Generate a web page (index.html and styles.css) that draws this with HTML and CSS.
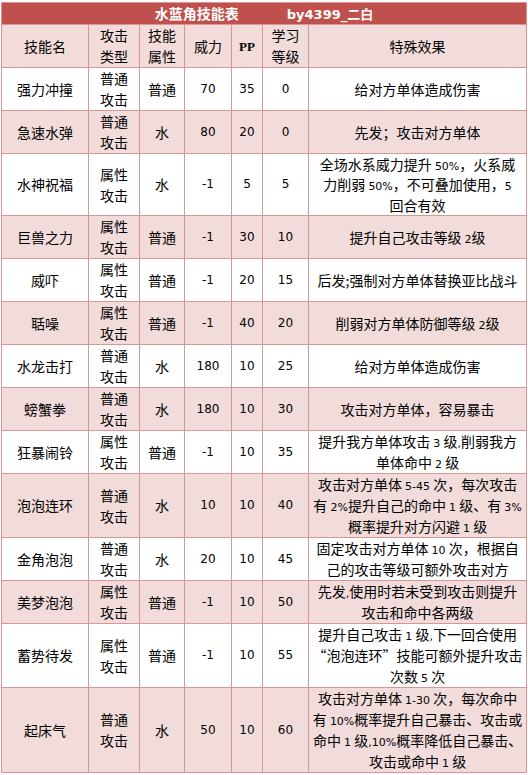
FILE: index.html
```html
<!DOCTYPE html>
<html lang="zh-CN">
<head>
<meta charset="utf-8">
<title>水蓝角技能表</title>
<link rel="stylesheet" href="styles.css">
</head>
<body>
<table class="skills">
  <colgroup>
    <col class="c1"><col class="c2"><col class="c3"><col class="c4"><col class="c5"><col class="c6"><col class="c7">
  </colgroup>
  <thead>
    <tr class="title-row">
      <th colspan="7" class="title"><span>水蓝角技能表</span><span class="author">by4399_二白</span></th>
    </tr>
    <tr class="head">
      <th>技能名</th><th>攻击<br>类型</th><th>技能<br>属性</th><th>威力</th><th class="pp">PP</th><th>学习<br>等级</th><th>特殊效果</th>
    </tr>
  </thead>
  <tbody>
    <tr>
      <td>强力冲撞</td><td>普通<br>攻击</td><td>普通</td><td class="n">70</td><td class="n">35</td><td class="n">0</td><td>给对方单体造成伤害</td>
    </tr>
    <tr class="alt">
      <td>急速水弹</td><td>普通<br>攻击</td><td>水</td><td class="n">80</td><td class="n">20</td><td class="n">0</td><td>先发；攻击对方单体</td>
    </tr>
    <tr class="tight">
      <td>水神祝福</td><td>属性<br>攻击</td><td>水</td><td class="n">-1</td><td class="n">5</td><td class="n">5</td><td>全场水系威力提升 <span class="d">50%</span>，火系威<br>力削弱 <span class="d">50%</span>，不可叠加使用，<span class="d">5</span><br>回合有效</td>
    </tr>
    <tr class="alt">
      <td>巨兽之力</td><td>属性<br>攻击</td><td>普通</td><td class="n">-1</td><td class="n">30</td><td class="n">10</td><td>提升自己攻击等级 <span class="d">2</span>级</td>
    </tr>
    <tr>
      <td>威吓</td><td>属性<br>攻击</td><td>普通</td><td class="n">-1</td><td class="n">20</td><td class="n">15</td><td>后发;强制对方单体替换亚比战斗</td>
    </tr>
    <tr class="alt">
      <td>聒噪</td><td>属性<br>攻击</td><td>普通</td><td class="n">-1</td><td class="n">40</td><td class="n">20</td><td>削弱对方单体防御等级 <span class="d">2</span>级</td>
    </tr>
    <tr>
      <td>水龙击打</td><td>普通<br>攻击</td><td>水</td><td class="n">180</td><td class="n">10</td><td class="n">25</td><td>给对方单体造成伤害</td>
    </tr>
    <tr class="alt">
      <td>螃蟹拳</td><td>普通<br>攻击</td><td>水</td><td class="n">180</td><td class="n">10</td><td class="n">30</td><td>攻击对方单体，容易暴击</td>
    </tr>
    <tr>
      <td>狂暴闹铃</td><td>属性<br>攻击</td><td>普通</td><td class="n">-1</td><td class="n">10</td><td class="n">35</td><td>提升我方单体攻击 <span class="d">3</span> 级<span class="d">,</span>削弱我方<br>单体命中 <span class="d">2</span> 级</td>
    </tr>
    <tr class="alt">
      <td>泡泡连环</td><td>普通<br>攻击</td><td>水</td><td class="n">10</td><td class="n">10</td><td class="n">40</td><td>攻击对方单体 <span class="d">5-45</span> 次，每次攻击<br>有 <span class="d">2%</span>提升自己的命中 <span class="d">1</span> 级、有 <span class="d">3%</span><br>概率提升对方闪避 <span class="d">1</span> 级</td>
    </tr>
    <tr>
      <td>金角泡泡</td><td>普通<br>攻击</td><td>水</td><td class="n">20</td><td class="n">10</td><td class="n">45</td><td>固定攻击对方单体 <span class="d">10</span> 次，根据自<br>己的攻击等级可额外攻击对方</td>
    </tr>
    <tr class="alt">
      <td>美梦泡泡</td><td>属性<br>攻击</td><td>普通</td><td class="n">-1</td><td class="n">10</td><td class="n">50</td><td>先发<span class="d">,</span>使用时若未受到攻击则提升<br>攻击和命中各两级</td>
    </tr>
    <tr>
      <td>蓄势待发</td><td>属性<br>攻击</td><td>普通</td><td class="n">-1</td><td class="n">10</td><td class="n">55</td><td>提升自己攻击 <span class="d">1</span> 级<span class="d">,</span>下一回合使用<br>“泡泡连环”技能可额外提升攻击<br>次数 <span class="d">5</span> 次</td>
    </tr>
    <tr class="alt">
      <td>起床气</td><td>普通<br>攻击</td><td>水</td><td class="n">50</td><td class="n">10</td><td class="n">60</td><td>攻击对方单体 <span class="d">1-30</span> 次，每次命中<br>有 <span class="d">10%</span>概率提升自己暴击、攻击或<br>命中 <span class="d">1</span> 级<span class="d">,10%</span>概率降低自己暴击、<br>攻击或命中 <span class="d">1</span> 级</td>
    </tr>
  </tbody>
</table>
</body>
</html>
```

FILE: styles.css
```css
html, body {
  margin: 0;
  padding: 0;
  background: #ffffff;
}

body {
  padding: 2px 0 0 1px;
  font-family: "Noto Sans CJK SC", "Noto Sans", sans-serif;
  font-size: 14px;
  color: #000000;
}

.skills {
  border-collapse: collapse;
  table-layout: fixed;
  width: 525px;
}

.c1 { width: 87px; }
.c2 { width: 51px; }
.c3 { width: 45px; }
.c4 { width: 47px; }
.c5 { width: 31px; }
.c6 { width: 46px; }
.c7 { width: 218px; }

.skills th,
.skills td {
  border: 1px solid #d99694;
  padding: 0;
  text-align: center;
  vertical-align: middle;
  line-height: 21px;
  font-weight: normal;
  white-space: nowrap;
  overflow: hidden;
}

.skills tbody tr,
.skills .head {
  height: 43px;
}

.title-row .title {
  background: #c0504d;
  color: #ffffff;
  font-weight: bold;
  height: 21px;
  line-height: 21px;
}

.title .author {
  margin-left: 48px;
  font-family: "DejaVu Sans", "Noto Sans CJK SC", sans-serif;
  font-size: 13px;
  line-height: 0;
}

.head th {
  background: #f2dcdb;
}

.head .pp {
  font-family: "Liberation Serif", serif;
  font-weight: bold;
  font-size: 13px;
}

.alt td {
  background: #f2dcdb;
}

.skills td.n {
  font-family: "DejaVu Sans", sans-serif;
  font-size: 12px;
}

.d {
  font-family: "DejaVu Sans", sans-serif;
  font-size: 11px;
  line-height: 0;
}

.tight td {
  line-height: 20.4px;
}
```
